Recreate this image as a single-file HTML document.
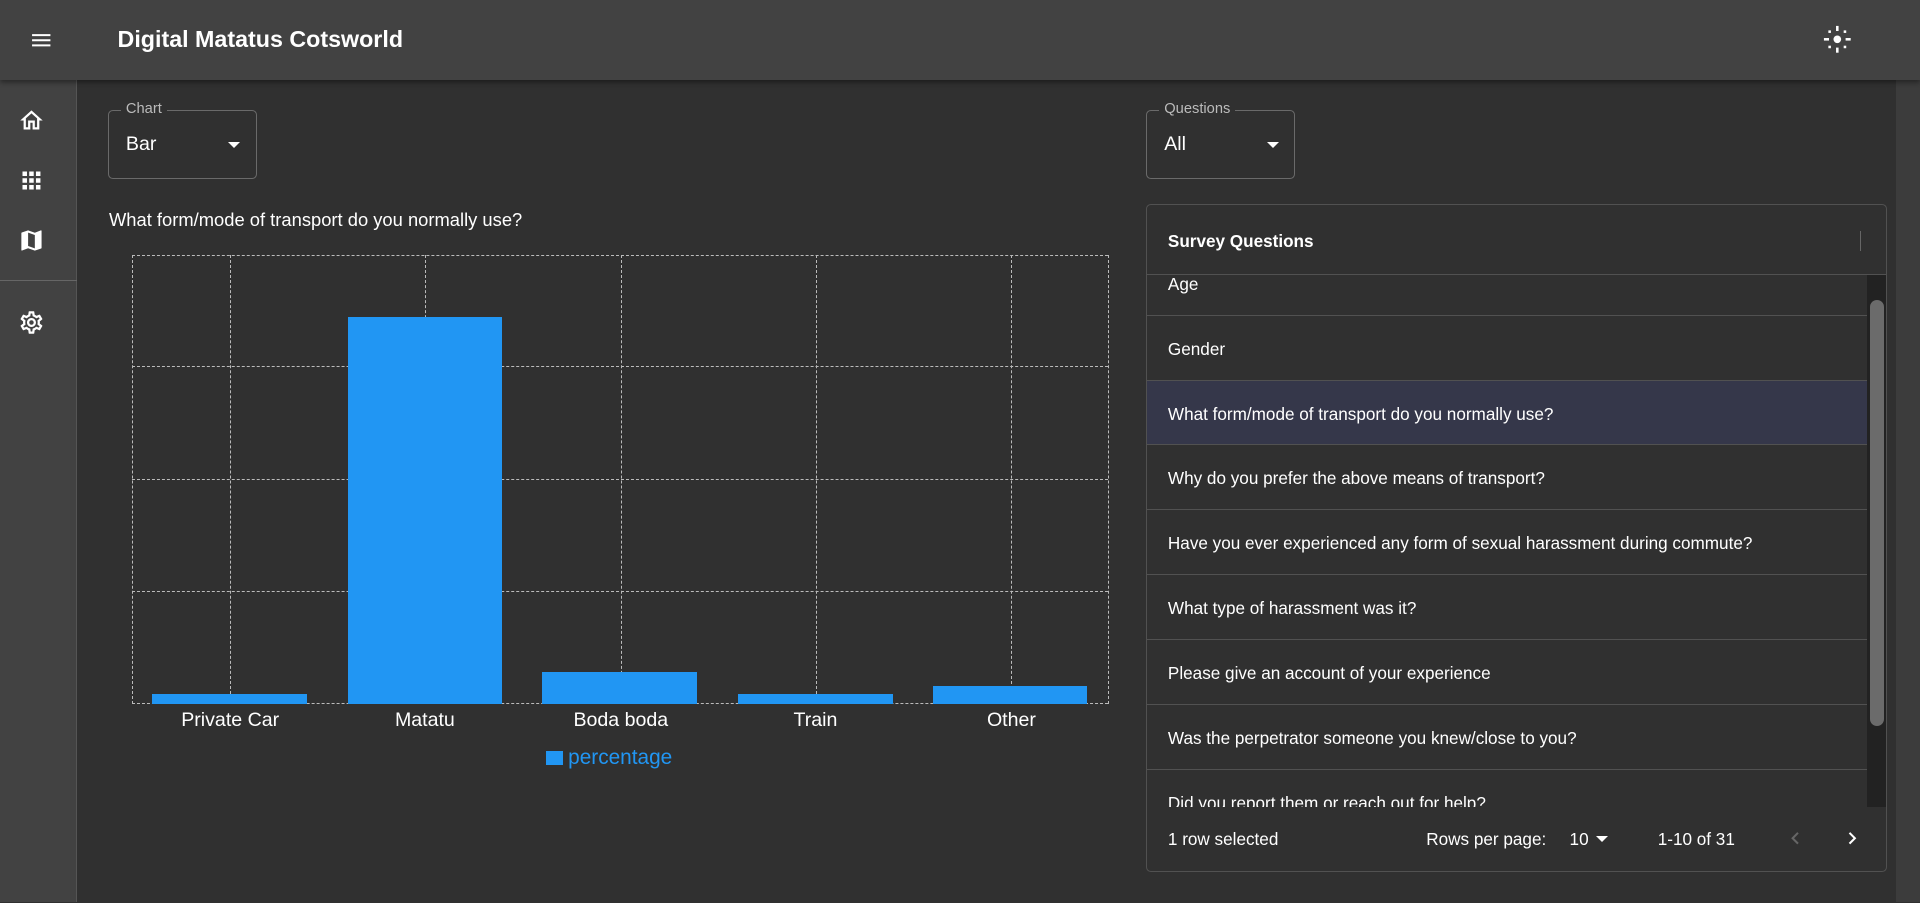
<!DOCTYPE html>
<html><head><meta charset="utf-8"><style>
*{box-sizing:border-box;margin:0;padding:0}
html,body{width:1920px;height:903px;overflow:hidden;background:#303030}
#w{zoom:1.2244898;width:1568px;height:737px;position:relative;font-family:"Liberation Sans",sans-serif;color:#fff;background:#303030;overflow:hidden}
.abs{position:absolute}
.hdr{left:0;top:0;width:1568px;height:65px;background:#424242;box-shadow:0 2px 4px rgba(0,0,0,.4);z-index:3}
.side{left:0;top:65px;width:63px;height:672px;background:#424242;border-right:1px solid #555}
.sel{border:1px solid #6a6a6a;border-radius:4px;height:56px;width:122px}
.sel .lab{position:absolute;top:-8px;left:10px;background:#303030;padding:0 4px;font-size:12px;color:#bbb}
.sel .val{position:absolute;left:14px;top:18px;font-size:16px}
.sel .arr{position:absolute;right:13px;top:25px;border-left:5px solid transparent;border-right:5px solid transparent;border-top:5px solid #fff}
.h{height:1px;border-top:1px dashed #bbb}
.v{width:1px;border-left:1px dashed #bbb}
.bar{background:#2196f3}
.xl{font-size:16px;text-align:center;width:160px;top:579px}
.row{position:absolute;left:0;width:588px;height:53px;border-bottom:1px solid #515151;font-size:14px;padding-left:17px;line-height:54px}
</style></head><body><div id="w">
<div class="abs hdr">
 <svg class="abs" style="left:24px;top:23px" width="20" height="20" viewBox="0 0 24 24"><path d="M3 18h18v-2H3v2zm0-5h18v-2H3v2zm0-7v2h18V6H3z" fill="#fff"/></svg>
 <div class="abs" style="left:96px;top:21px;font-size:19px;font-weight:bold">Digital Matatus Cotsworld</div>
 <svg class="abs" style="left:1488px;top:20px" width="25" height="25" viewBox="0 0 24 24" fill="#fff"><circle cx="12" cy="12" r="3"/><rect x="11" y="1.5" width="2" height="4"/><rect x="11" y="18.5" width="2" height="4"/><rect x="1.5" y="11" width="4" height="2"/><rect x="18.5" y="11" width="4" height="2"/><rect x="5" y="5" width="2" height="2"/><rect x="17" y="5" width="2" height="2"/><rect x="5" y="17" width="2" height="2"/><rect x="17" y="17" width="2" height="2"/></svg>
</div>
<div class="abs side">
 <svg class="abs" style="left:15px;top:22px" width="22" height="22" viewBox="0 0 24 24"><path d="M12 5.69l5 4.5V18h-2v-6H9v6H7v-7.81l5-4.5M12 3L2 12h3v8h6v-6h2v6h6v-8h3L12 3z" fill="#fff"/></svg>
 <svg class="abs" style="left:15px;top:71px" width="22" height="22" viewBox="0 0 24 24"><path d="M4 8h4V4H4v4zm6 12h4v-4h-4v4zm-6 0h4v-4H4v4zm0-6h4v-4H4v4zm6 0h4v-4h-4v4zm6-10v4h4V4h-4zm-6 4h4V4h-4v4zm6 6h4v-4h-4v4zm0 6h4v-4h-4v4z" fill="#fff"/></svg>
 <svg class="abs" style="left:15px;top:120px" width="22" height="22" viewBox="0 0 24 24"><path d="M20.5 3l-.16.03L15 5.1 9 3 3.36 4.9c-.21.07-.36.25-.36.48V20.5c0 .28.22.5.5.5l.16-.03L9 18.9l6 2.1 5.64-1.9c.21-.07.36-.25.36-.48V3.5c0-.28-.22-.5-.5-.5zM15 19l-6-2.11V5l6 2.11V19z" fill="#fff"/></svg>
 <div class="abs" style="left:0;top:164px;width:63px;border-top:1px solid #666"></div>
 <svg class="abs" style="left:15px;top:187px" width="22" height="22" viewBox="0 0 24 24"><path d="M19.43 12.98c.04-.32.07-.64.07-.98s-.03-.66-.07-.98l2.11-1.65c.19-.15.24-.42.12-.64l-2-3.46c-.12-.22-.39-.3-.61-.22l-2.49 1c-.52-.4-1.08-.73-1.69-.98l-.38-2.65A.488.488 0 0014 2h-4c-.25 0-.46.18-.49.42l-.38 2.65c-.61.25-1.17.59-1.69.98l-2.49-1c-.23-.09-.49 0-.61.22l-2 3.46c-.13.22-.07.49.12.64l2.11 1.65c-.04.32-.07.65-.07.98s.03.66.07.98l-2.11 1.65c-.19.15-.24.42-.12.64l2 3.46c.12.22.39.3.61.22l2.49-1c.52.4 1.08.73 1.69.98l.38 2.65c.03.24.24.42.49.42h4c.25 0 .46-.18.49-.42l.38-2.65c.61-.25 1.17-.59 1.69-.98l2.49 1c.23.09.49 0 .61-.22l2-3.46c.12-.22.07-.49-.12-.64l-2.11-1.65zM17.45 11.27c.04.31.05.52.05.73 0 .21-.02.43-.05.73l-.14 1.13.89.7 1.08.84-.7 1.21-1.27-.51-1.04-.42-.9.68c-.43.32-.84.56-1.25.73l-1.06.43-.16 1.13-.2 1.35h-1.4l-.19-1.35-.16-1.13-1.06-.43c-.43-.18-.83-.41-1.23-.71l-.91-.7-1.06.43-1.27.51-.7-1.21 1.08-.84.89-.7-.14-1.13c-.03-.31-.05-.54-.05-.74s.02-.43.05-.73l.14-1.13-.89-.7-1.08-.84.7-1.21 1.27.51 1.04.42.9-.68c.43-.32.84-.56 1.25-.73l1.06-.43.16-1.13.2-1.35h1.39l.19 1.35.16 1.13 1.06.43c.43.18.83.41 1.23.71l.91.7 1.06-.43 1.27-.51.7 1.21-1.07.85-.89.7.14 1.13zM12 8c-2.21 0-4 1.79-4 4s1.79 4 4 4 4-1.79 4-4-1.79-4-4-4zm0 6c-1.1 0-2-.9-2-2s.9-2 2-2 2 .9 2 2-.9 2-2 2z" fill="#fff"/></svg>
</div>
<div class="abs" style="left:1548px;top:65px;width:20px;height:672px;background:#3c3c3c"></div>

<div class="abs sel" style="left:88px;top:90px"><span class="lab">Chart</span><span class="val">Bar</span><span class="arr"></span></div>
<div class="abs sel" style="left:936px;top:90px"><span class="lab">Questions</span><span class="val">All</span><span class="arr"></span></div>
<div class="abs" style="left:89px;top:171px;font-size:15px">What form/mode of transport do you normally use?</div>

<div class="abs h" style="left:108px;top:208px;width:797px"></div>
<div class="abs h" style="left:108px;top:299px;width:797px"></div>
<div class="abs h" style="left:108px;top:391px;width:797px"></div>
<div class="abs h" style="left:108px;top:483px;width:797px"></div>
<div class="abs h" style="left:108px;top:574px;width:797px"></div>
<div class="abs v" style="left:108px;top:208px;height:367px"></div>
<div class="abs v" style="left:188px;top:208px;height:367px"></div>
<div class="abs v" style="left:347px;top:208px;height:367px"></div>
<div class="abs v" style="left:507px;top:208px;height:367px"></div>
<div class="abs v" style="left:666px;top:208px;height:367px"></div>
<div class="abs v" style="left:826px;top:208px;height:367px"></div>
<div class="abs v" style="left:905px;top:208px;height:367px"></div>
<div class="abs bar" style="left:124px;top:567px;width:127px;height:8px"></div>
<div class="abs bar" style="left:284px;top:259px;width:126px;height:316px"></div>
<div class="abs bar" style="left:443px;top:549px;width:126px;height:26px"></div>
<div class="abs bar" style="left:603px;top:567px;width:126px;height:8px"></div>
<div class="abs bar" style="left:762px;top:560px;width:126px;height:15px"></div>
<div class="abs xl" style="left:108px">Private Car</div>
<div class="abs xl" style="left:267px">Matatu</div>
<div class="abs xl" style="left:427px">Boda boda</div>
<div class="abs xl" style="left:586px">Train</div>
<div class="abs xl" style="left:746px">Other</div>
<div class="abs bar" style="left:446px;top:613px;width:14px;height:12px"></div>
<div class="abs" style="left:464px;top:609px;font-size:17px;color:#2196f3">percentage</div>

<div class="abs" style="left:936px;top:167px;width:605px;height:545px;border:1px solid #515151;border-radius:4px;overflow:hidden">
 <div class="abs" style="left:0;top:0;width:605px;height:57px;border-bottom:1px solid #515151"></div>
 <div class="abs" style="left:17px;top:21px;font-size:14px;font-weight:bold">Survey Questions</div>
 <div class="abs" style="left:582px;top:21px;width:1px;height:16px;background:#666"></div>
 <div class="abs" style="left:0;top:57px;width:588px;height:434px;overflow:hidden">
  <div class="row" style="top:-20px">Age</div>
  <div class="row" style="top:33px">Gender</div>
  <div class="row" style="top:86px;background:#35374a">What form/mode of transport do you normally use?</div>
  <div class="row" style="top:139px">Why do you prefer the above means of transport?</div>
  <div class="row" style="top:192px">Have you ever experienced any form of sexual harassment during commute?</div>
  <div class="row" style="top:245px">What type of harassment was it?</div>
  <div class="row" style="top:298px">Please give an account of your experience</div>
  <div class="row" style="top:351px">Was the perpetrator someone you knew/close to you?</div>
  <div class="row" style="top:404px">Did you report them or reach out for help?</div>
 </div>
 <div class="abs" style="left:588px;top:57px;width:16px;height:434px;background:#222"></div>
 <div class="abs" style="left:590px;top:77px;width:12px;height:348px;background:#6b6b6b;border-radius:6px"></div>
 <div class="abs" style="left:17px;top:509px;font-size:14px">1 row selected</div>
 <div class="abs" style="left:228px;top:509px;font-size:14px">Rows per page:</div>
 <div class="abs" style="left:345px;top:509px;font-size:14px">10</div>
 <div class="abs" style="left:355px;top:515px;border-left:5px solid transparent;border-right:5px solid transparent;border-top:5px solid #fff;margin-left:12px"></div>
 <div class="abs" style="left:417px;top:509px;font-size:14px">1-10 of 31</div>
 <svg class="abs" style="left:519px;top:507px" width="20" height="20" viewBox="0 0 24 24"><path d="M15.41 7.41L14 6l-6 6 6 6 1.41-1.41L10.83 12z" fill="#666"/></svg>
 <svg class="abs" style="left:566px;top:507px" width="20" height="20" viewBox="0 0 24 24"><path d="M10 6L8.59 7.41 13.17 12l-4.58 4.59L10 18l6-6z" fill="#fff"/></svg>
</div>
</div></body></html>
